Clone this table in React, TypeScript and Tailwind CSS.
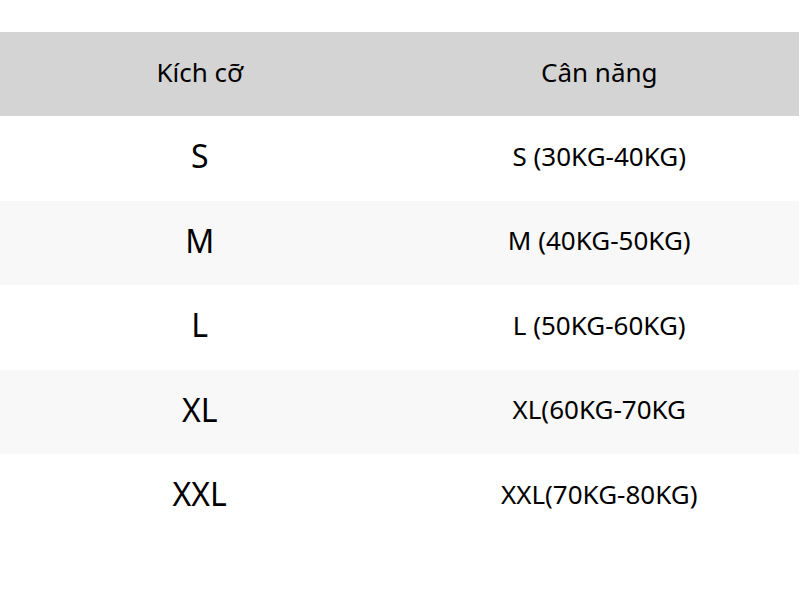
const rows = [
  { size: "S", weight: "S (30KG-40KG)" },
  { size: "M", weight: "M (40KG-50KG)" },
  { size: "L", weight: "L (50KG-60KG)" },
  { size: "XL", weight: "XL(60KG-70KG" },
  { size: "XXL", weight: "XXL(70KG-80KG)" },
];

export default function App() {
  return (
    <div className="min-h-[608px] w-[800px] bg-white pt-8 font-['Noto_Sans',sans-serif] text-black">
      <div className="w-[799px]">
        <div className="grid h-[84px] grid-cols-2 items-center bg-[#d4d4d4] pb-1 text-[26px]">
          <div className="text-center">Kích cỡ</div>
          <div className="text-center">Cân năng</div>
        </div>
        {rows.map((r, i) => (
          <div
            key={r.size}
            className={
              i % 2 === 1
                ? "grid h-[84.5px] grid-cols-2 items-center bg-[#f8f8f8] pb-1"
                : "grid h-[84.5px] grid-cols-2 items-center bg-white pb-1"
            }
          >
            <div className="text-center text-[32px]">{r.size}</div>
            <div className="text-center text-[26px]">{r.weight}</div>
          </div>
        ))}
      </div>
    </div>
  );
}
